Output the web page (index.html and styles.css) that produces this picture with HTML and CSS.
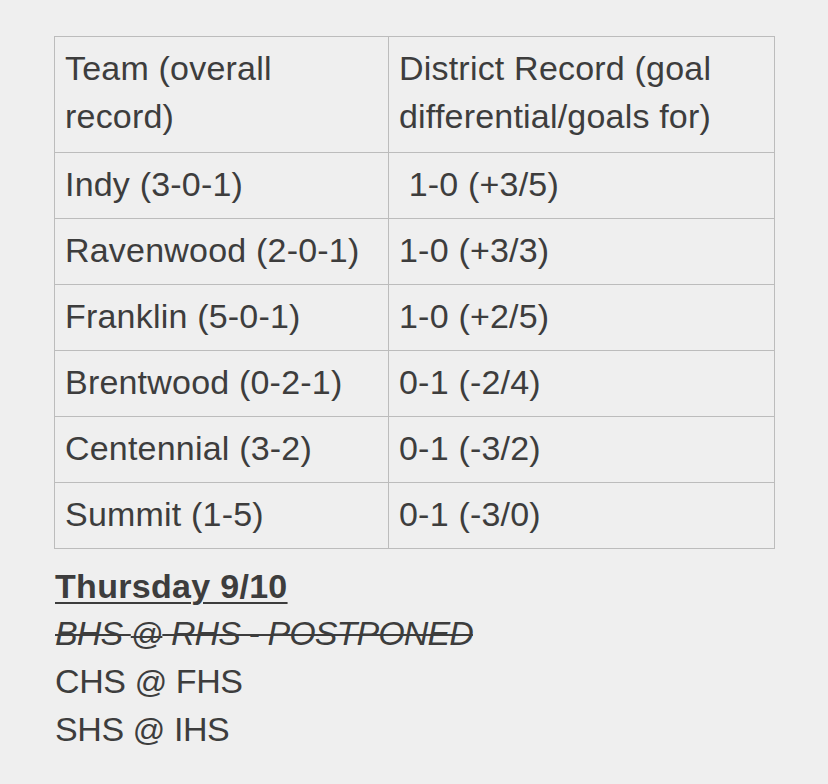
FILE: index.html
```html
<!DOCTYPE html>
<html lang="en">
<head>
<meta charset="utf-8">
<title>District Standings</title>
<link rel="stylesheet" href="styles.css">
</head>
<body>
<main class="note">
  <table class="standings">
    <colgroup>
      <col class="col-team">
      <col class="col-record">
    </colgroup>
    <thead>
      <tr>
        <th>Team (overall record)</th>
        <th>District Record (goal differential/goals for)</th>
      </tr>
    </thead>
    <tbody>
      <tr><td>Indy (3-0-1)</td><td>&nbsp;1-0 (+3/5)</td></tr>
      <tr><td>Ravenwood (2-0-1)</td><td>1-0 (+3/3)</td></tr>
      <tr><td>Franklin (5-0-1)</td><td>1-0 (+2/5)</td></tr>
      <tr><td>Brentwood (0-2-1)</td><td>0-1 (-2/4)</td></tr>
      <tr><td>Centennial (3-2)</td><td>0-1 (-3/2)</td></tr>
      <tr><td>Summit (1-5)</td><td>0-1 (-3/0)</td></tr>
    </tbody>
  </table>
  <section class="schedule">
    <div class="day">Thursday 9/10</div>
    <div class="game cancelled">BHS <span class="at">@</span> RHS - POSTPONED</div>
    <div class="game">CHS <span class="at">@</span> FHS</div>
    <div class="game">SHS <span class="at">@</span> IHS</div>
  </section>
</main>
</body>
</html>
```
FILE: styles.css
```css
html, body {
  margin: 0;
  padding: 0;
  background: #efefef;
}

body {
  font-family: "Liberation Sans", Arial, sans-serif;
  font-size: 34px;
  color: #3d3d3d;
  width: 828px;
  height: 784px;
  overflow: hidden;
}

.note {
  padding: 36px 0 0 54px;
}

.standings {
  width: 720px;
  border-collapse: collapse;
  table-layout: fixed;
  line-height: 48px;
  letter-spacing: 0.2px;
}

.col-team {
  width: 334px;
}

.col-record {
  width: 386px;
}

.standings th,
.standings td {
  border: 1px solid #bcbcbc;
  padding: 7px 10px 10px 10px;
  text-align: left;
  font-weight: normal;
  vertical-align: top;
}

.standings th {
  padding-bottom: 12px;
}

.schedule {
  margin-top: 14px;
  padding-left: 1px;
}

.day {
  font-weight: bold;
  text-decoration: underline;
  text-decoration-thickness: 2px;
  text-underline-offset: 4px;
  line-height: 46px;
  letter-spacing: 0.3px;
}

.game {
  line-height: 48px;
  letter-spacing: -0.4px;
}

.at {
  font-size: 32px;
  line-height: 0;
}

.cancelled {
  font-style: italic;
  text-decoration: line-through;
  text-decoration-thickness: 2px;
  letter-spacing: -0.9px;
}
```
